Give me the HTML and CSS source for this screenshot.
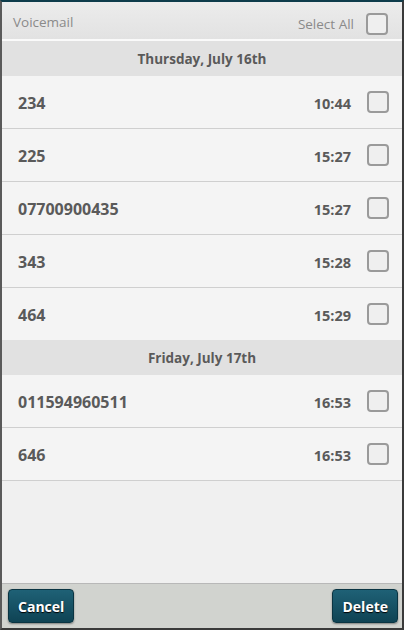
FILE: index.html
```html
<!DOCTYPE html>
<html>
<head>
<meta charset="utf-8">
<link rel="stylesheet" href="styles.css">
</head>
<body>
<div class="frame">
  <header class="topbar">
    <span class="title">Voicemail</span>
    <label class="select-all"><span>Select All</span><span class="box"></span></label>
  </header>
  <main class="list">
    <div class="day">Thursday, July 16th</div>
    <div class="row"><span class="num">234</span><span class="time">10:44</span><span class="box"></span></div>
    <div class="row"><span class="num">225</span><span class="time">15:27</span><span class="box"></span></div>
    <div class="row"><span class="num">07700900435</span><span class="time">15:27</span><span class="box"></span></div>
    <div class="row"><span class="num">343</span><span class="time">15:28</span><span class="box"></span></div>
    <div class="row last"><span class="num">464</span><span class="time">15:29</span><span class="box"></span></div>
    <div class="day">Friday, July 17th</div>
    <div class="row"><span class="num">011594960511</span><span class="time">16:53</span><span class="box"></span></div>
    <div class="row"><span class="num">646</span><span class="time">16:53</span><span class="box"></span></div>
  </main>
  <footer class="bottombar">
    <button class="btn">Cancel</button>
    <button class="btn">Delete</button>
  </footer>
</div>
</body>
</html>
```
FILE: styles.css
```css
html, body {
  margin: 0;
  padding: 0;
}
body {
  width: 404px;
  height: 630px;
  font-family: "Open Sans", "DejaVu Sans", sans-serif;
}
.frame {
  box-sizing: border-box;
  width: 404px;
  height: 630px;
  border-top: 2px solid #0e3c4b;
  border-left: 2px solid #5a5a5a;
  border-right: 2px solid #3a3a3a;
  border-bottom: 2px solid #3a3a3a;
  display: flex;
  flex-direction: column;
  background: #f0f0f0;
}
.topbar {
  height: 30px;
  padding: 7px 14px 0 11px;
  flex: none;
  display: flex;
  align-items: center;
  justify-content: space-between;
  background: linear-gradient(#ececec, #e2e2e2);
  border-bottom: 2px solid #fafafa;
  box-shadow: 0 1px 0 #d6d6d6;
}
.title {
  font-size: 13.5px;
  color: #8a8a8a;
  margin-top: -4px;
}
.select-all {
  display: flex;
  align-items: center;
  gap: 12px;
  font-size: 13.5px;
  color: #8a8a8a;
}
.box {
  box-sizing: border-box;
  width: 22px;
  height: 22px;
  border: 2px solid #9a9a9a;
  border-radius: 4px;
  background: #efefef;
  flex: none;
}
.list {
  flex: 1;
  background: #f0f0f0;
}
.day {
  height: 35px;
  display: flex;
  align-items: center;
  justify-content: center;
  background: #e1e1e1;
  font-size: 13.5px;
  font-weight: 700;
  color: #5a5a5a;
}
.row {
  height: 52px;
  display: flex;
  align-items: center;
  padding: 0 13px 0 16px;
  background: #f4f4f4;
  border-bottom: 1px solid #cfcfcf;
}
.row.last {
  border-bottom: none;
}
.num {
  flex: 1;
  font-size: 16px;
  font-weight: 700;
  color: #5a5a5a;
  margin-top: 2px;
}
.time {
  font-size: 14.5px;
  font-weight: 700;
  color: #5a5a5a;
  margin-right: 16px;
  margin-top: 2px;
}
.bottombar {
  height: 44px;
  flex: none;
  display: flex;
  align-items: center;
  justify-content: space-between;
  padding: 0 4px 0 6px;
  background: #d1d3cf;
  border-top: 1px solid #b8b8b8;
}
.btn {
  height: 34px;
  padding: 0 9px;
  border: 1px solid #0a3442;
  border-radius: 4px;
  background: linear-gradient(#1f6176, #0f4354);
  color: #fff;
  font-family: "Open Sans", "DejaVu Sans", sans-serif;
  font-size: 14px;
  font-weight: 700;
  text-shadow: 0 1px 1px #000;
  box-shadow: 0 1px 2px rgba(0,0,0,0.4);
}
```
